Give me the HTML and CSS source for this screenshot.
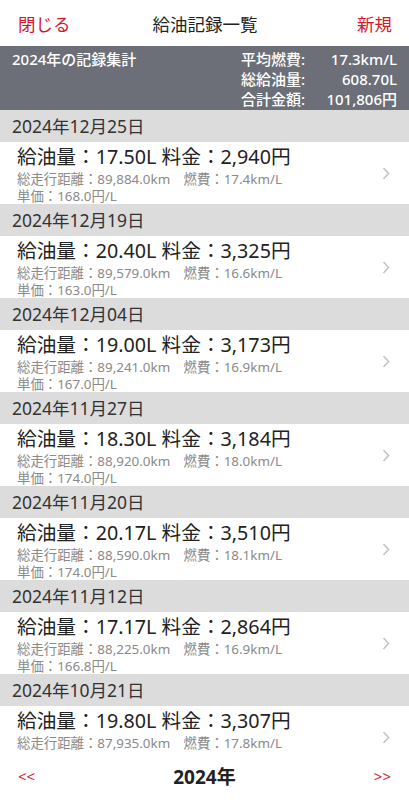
FILE: index.html
```html
<!DOCTYPE html>
<html lang="ja">
<head>
<meta charset="utf-8">
<link rel="stylesheet" href="styles.css">
</head>
<body>
<header class="nav">
  <span class="nav-btn">閉じる</span>
  <span class="nav-title">給油記録一覧</span>
  <span class="nav-btn right">新規</span>
</header>
<section class="summary">
  <div class="summary-title">2024年の記録集計</div>
  <div class="summary-grid">
    <span>平均燃費:</span><span class="val">17.3km/L</span>
    <span>総給油量:</span><span class="val">608.70L</span>
    <span>合計金額:</span><span class="val">101,806円</span>
  </div>
</section>
<main class="list" id="list"></main>
<footer class="footer">
  <span class="pager">&lt;&lt;</span>
  <span class="year">2024年</span>
  <span class="pager right">&gt;&gt;</span>
</footer>
<script src="app.js"></script>
</body>
</html>
```
FILE: styles.css
```css
* { box-sizing: border-box; }
html, body { margin: 0; padding: 0; }
body {
  width: 409px;
  height: 800px;
  overflow: hidden;
  font-family: "Noto Sans", "Noto Sans CJK JP", sans-serif;
  background: #fff;
  color: #222;
  position: relative;
}
.nav {
  height: 46px;
  display: grid;
  grid-template-columns: 1fr auto 1fr;
  align-items: center;
  padding: 0 17px 0 18px;
}
.nav-btn { color: #d3182b; font-size: 17.5px; }
.right { text-align: right; }
.nav-title { font-size: 17.5px; color: #222; }
.summary {
  background: #6c6f77;
  color: #fff;
  height: 64px;
  display: flex;
  justify-content: space-between;
  padding: 4px 12px 0 12px;
  font-size: 15px;
  font-weight: 500;
  line-height: 19px;
}
.summary-grid {
  display: grid;
  grid-template-columns: auto 92px;
}
.summary-grid .val { text-align: right; }
.date {
  background: #dcdcdc;
  height: 32px;
  line-height: 32px;
  padding-left: 12px;
  font-size: 17.5px;
  color: #333;
}
.row {
  height: 62px;
  display: flex;
  align-items: center;
  padding: 0 18px 0 17px;
}
.row-body { flex: 1; padding-top: 1px; height: 62px; }
.main { font-size: 19.7px; line-height: 28px; color: #222; }
.sub { font-size: 13.4px; line-height: 16.5px; color: #8a8a8a; }
.chev { width: 8px; height: 13px; margin-right: 1px; }
.footer {
  position: absolute;
  left: 0; right: 0; bottom: 0;
  height: 48px;
  background: #fff;
  display: grid;
  grid-template-columns: 1fr auto 1fr;
  align-items: center;
  padding: 0 18px 0 18px;
}
.pager { color: #d3182b; font-size: 15px; }
.year { font-size: 19px; font-weight: 700; color: #222; }
```
FILE: app.js
```js
const data = [
  ["2024年12月25日","17.50L","2,940円","89,884.0km","17.4km/L","168.0円/L"],
  ["2024年12月19日","20.40L","3,325円","89,579.0km","16.6km/L","163.0円/L"],
  ["2024年12月04日","19.00L","3,173円","89,241.0km","16.9km/L","167.0円/L"],
  ["2024年11月27日","18.30L","3,184円","88,920.0km","18.0km/L","174.0円/L"],
  ["2024年11月20日","20.17L","3,510円","88,590.0km","18.1km/L","174.0円/L"],
  ["2024年11月12日","17.17L","2,864円","88,225.0km","16.9km/L","166.8円/L"],
  ["2024年10月21日","19.80L","3,307円","87,935.0km","17.8km/L","167.0円/L"]
];
const list = document.getElementById('list');
for (const d of data) {
  const date = document.createElement('div');
  date.className = 'date';
  date.textContent = d[0];
  list.appendChild(date);
  const row = document.createElement('div');
  row.className = 'row';
  row.innerHTML = '<div class="row-body"><div class="main">給油量：' + d[1] + ' 料金：' + d[2] + '</div>' +
    '<div class="sub">総走行距離：' + d[3] + '　燃費：' + d[4] + '</div>' +
    '<div class="sub">単価：' + d[5] + '</div></div>' +
    '<svg class="chev" viewBox="0 0 8 13"><polyline points="1.5,1 6.5,6.5 1.5,12" fill="none" stroke="#c4c4c4" stroke-width="1.6"/></svg>';
  list.appendChild(row);
}
```
